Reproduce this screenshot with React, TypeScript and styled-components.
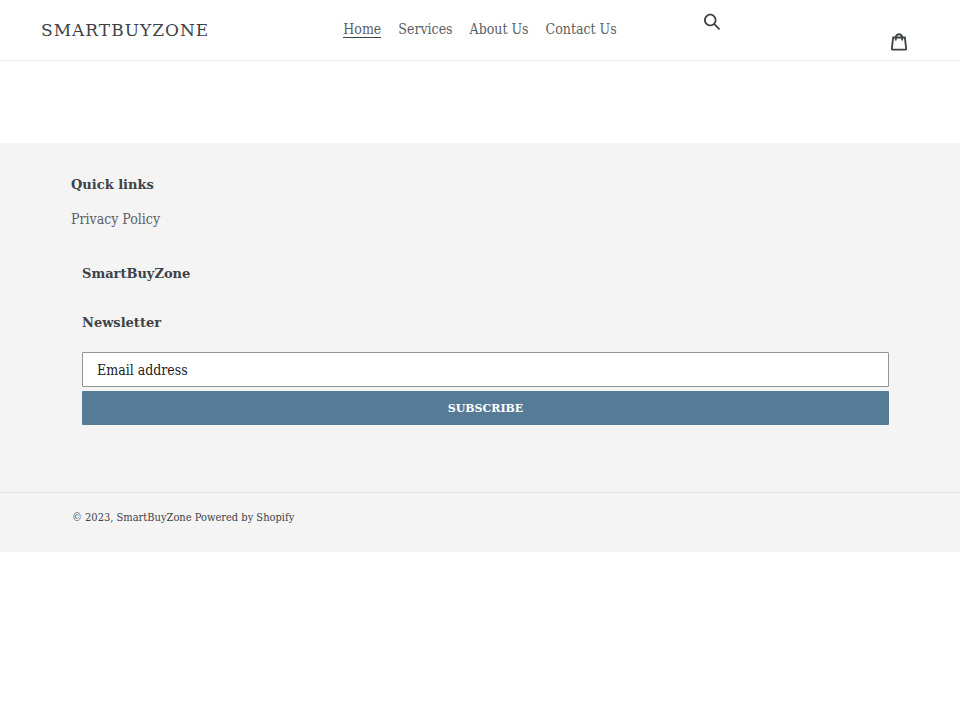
import React from "react";
import styled, { createGlobalStyle } from "styled-components";

const GlobalStyle = createGlobalStyle`
  *, *::before, *::after { box-sizing: border-box; }
  body {
    margin: 0;
    background: #fff;
    color: #3d4246;
    font-family: "DejaVu Serif Condensed", "DejaVu Serif", serif;
    font-size: 14px;
    line-height: 20px;
  }
`;

const Header = styled.header`
  display: grid;
  grid-template-columns: 1fr auto 1fr;
  align-items: center;
  height: 61px;
  padding: 0 41px;
  border-bottom: 1px solid #e8e9eb;
`;

const Logo = styled.a`
  justify-self: start;
  color: #3d4246;
  font-family: "DejaVu Serif", serif;
  font-size: 17px;
  letter-spacing: 1px;
  text-transform: uppercase;
  text-decoration: none;
`;

const Nav = styled.nav`
  display: flex;
  gap: 17px;
`;

const NavLink = styled.a<{ $active?: boolean }>`
  color: #5c6063;
  line-height: 15px;
  text-decoration: none;
  border-bottom: 1px solid ${(p) => (p.$active ? "#3d4246" : "transparent")};
`;

const Tools = styled.div`
  display: flex;
  justify-content: space-between;
  align-self: stretch;
  padding: 8px 11px 5px 86px;
`;

const IconButton = styled.button<{ $low?: boolean }>`
  display: flex;
  align-self: ${(p) => (p.$low ? "flex-end" : "flex-start")};
  padding: 4px 0;
  border: 0;
  background: none;
  color: #3d4246;
  cursor: pointer;
`;

const Icon = styled.svg`
  display: block;
  width: 18px;
  height: 18px;
  fill: currentColor;
`;

const Main = styled.main`
  min-height: 82px;
`;

const Footer = styled.footer`
  background: #f4f4f4;
`;

const FooterContent = styled.div`
  padding: 32px 71px 67px;
`;

const Heading = styled.h2`
  margin: 0;
  font-family: "DejaVu Serif", serif;
  font-size: 13px;
  font-weight: 700;
  line-height: 20px;
`;

const LinkList = styled.ul`
  list-style: none;
  margin: 14px 0 35px;
  padding: 0;
`;

const FooterLink = styled.a`
  color: #5c6063;
  text-decoration: none;
`;

const Inset = styled.section`
  padding-left: 11px;
`;

const Form = styled.form`
  display: grid;
  gap: 4px;
  margin-top: 19px;
`;

const Newsletter = styled(Inset)`
  margin-top: 29px;
`;

const Email = styled.input`
  width: 100%;
  height: 35px;
  padding: 0 14px;
  border: 1px solid #949494;
  border-radius: 1px;
  background: #fff;
  color: #222;
  font: inherit;
  &::placeholder { color: #222; opacity: 1; }
`;

const Subscribe = styled.button`
  height: 34px;
  padding: 0;
  border: 0;
  border-radius: 1px;
  background: #557b97;
  color: #fff;
  font-family: "DejaVu Serif", serif;
  font-size: 11px;
  font-weight: 700;
  text-transform: uppercase;
  cursor: pointer;
`;

const Copyright = styled.div`
  padding: 15px 72px 24px;
  border-top: 1px solid #e0e1e2;
  font-size: 11px;
`;

const PlainLink = styled.a`
  color: inherit;
  text-decoration: none;
`;

export default function App() {
  return (
    <>
      <GlobalStyle />
      <Header>
        <Logo href="#">SmartBuyZone</Logo>
        <Nav aria-label="Main">
          <NavLink href="#" $active aria-current="page">Home</NavLink>
          <NavLink href="#services">Services</NavLink>
          <NavLink href="#about">About Us</NavLink>
          <NavLink href="#contact">Contact Us</NavLink>
        </Nav>
        <Tools>
          <IconButton type="button" aria-label="Search">
            <Icon viewBox="0 0 37 40" aria-hidden="true">
              <path d="M35.6 36l-9.8-9.8c4.1-5.4 3.6-13.2-1.3-18.1-5.4-5.4-14.2-5.4-19.7 0-5.4 5.4-5.4 14.2 0 19.7 2.6 2.6 6.1 4.1 9.8 4.1 3 0 5.9-1 8.3-2.8l9.8 9.8c.4.4.9.6 1.4.6s1-.2 1.4-.6c.9-.9.9-2.1.1-2.9zm-20.9-8.2c-2.6 0-5.1-1-7-2.9-3.9-3.9-3.9-10.1 0-14C9.6 9 12.2 8 14.7 8s5.1 1 7 2.9c3.9 3.9 3.9 10.1 0 14-1.9 1.9-4.4 2.9-7 2.9z" />
            </Icon>
          </IconButton>
          <IconButton type="button" $low aria-label="Cart">
            <Icon viewBox="0 0 37 40" aria-hidden="true">
              <path d="M36.5 34.8L33.3 8h-5.9C26.7 3.9 23 .8 18.5.8S10.3 3.9 9.6 8H3.7L.5 34.8c-.2 1.5.4 2.4.9 3 .5.5 1.4 1.2 3.1 1.2h28c1.3 0 2.4-.4 3.1-1.3.7-.7 1-1.8.9-2.9zm-18-30c2.2 0 4.1 1.4 4.7 3.2h-9.5c.7-1.9 2.6-3.2 4.8-3.2zM4.5 35l2.8-23h2.2v3c0 1.1.9 2 2 2s2-.9 2-2v-3h10v3c0 1.1.9 2 2 2s2-.9 2-2v-3h2.2l2.8 23h-28z" />
            </Icon>
          </IconButton>
        </Tools>
      </Header>
      <Main />
      <Footer>
        <FooterContent>
          <section>
            <Heading>Quick links</Heading>
            <LinkList>
              <li><FooterLink href="#privacy">Privacy Policy</FooterLink></li>
            </LinkList>
          </section>
          <Inset><Heading>SmartBuyZone</Heading></Inset>
          <Newsletter>
            <Heading>Newsletter</Heading>
            <Form onSubmit={(e) => e.preventDefault()}>
              <Email type="email" placeholder="Email address" aria-label="Email address" />
              <Subscribe type="submit">Subscribe</Subscribe>
            </Form>
          </Newsletter>
        </FooterContent>
        <Copyright>
          © 2023, <PlainLink href="#">SmartBuyZone</PlainLink>{" "}
          <PlainLink href="#shopify">Powered by Shopify</PlainLink>
        </Copyright>
      </Footer>
    </>
  );
}
